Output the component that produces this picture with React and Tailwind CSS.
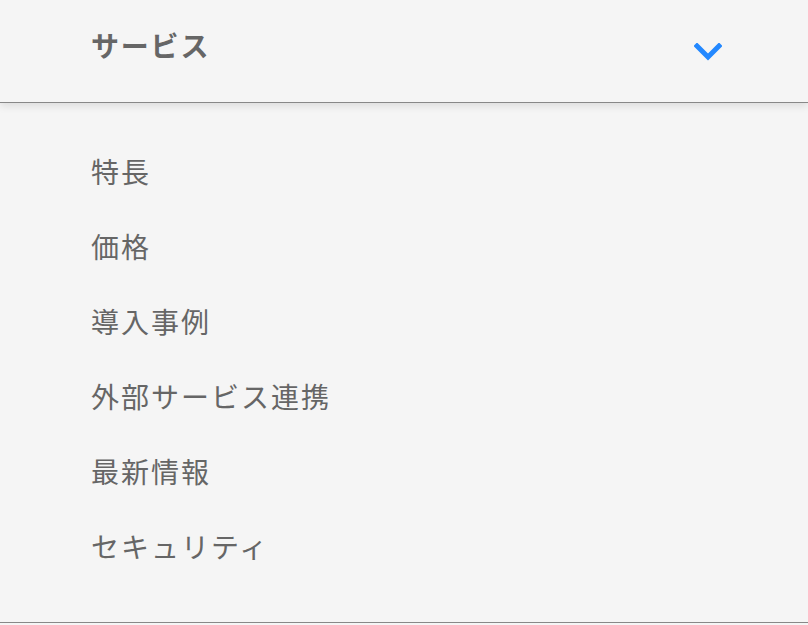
import { useState } from 'react';

const ITEMS = ['特長', '価格', '導入事例', '外部サービス連携', '最新情報', 'セキュリティ'];

const App = () => {
  const [open, setOpen] = useState(true);

  return (
    <div
      className="w-[808px] h-[625px] bg-[#f5f5f5] text-[#666] overflow-hidden"
      style={{ fontFamily: '"Noto Sans CJK JP", "Noto Sans", sans-serif' }}
    >
      {/* Accordion header */}
      <button
        onClick={() => setOpen(!open)}
        className="relative z-10 w-full h-[103px] flex items-center justify-between pl-[91px] pr-[86px] bg-[#f5f5f5] border-b border-[#888] shadow-[0_3px_8px_rgba(0,0,0,0.1)]"
      >
        <span className="text-[28px] font-bold tracking-[1.8px] leading-none -mt-[12px]">サービス</span>
        <svg width="28" height="19" viewBox="0 0 28 19" className="mt-[2px]">
          <polyline
            points="3,3 14,14 25,3"
            fill="none"
            stroke="#2388ff"
            strokeWidth="5"
            strokeLinecap="square"
          />
        </svg>
      </button>

      {/* Menu list */}
      {open && (
        <ul className="pt-[30px] pb-[39px] border-b border-[#888]">
          {ITEMS.map((label) => (
            <li key={label} className="h-[75px] flex items-center pl-[91px]">
              <a href="#" className="text-[28px] tracking-[2px] leading-none">
                {label}
              </a>
            </li>
          ))}
        </ul>
      )}
    </div>
  );
};

export default App;
